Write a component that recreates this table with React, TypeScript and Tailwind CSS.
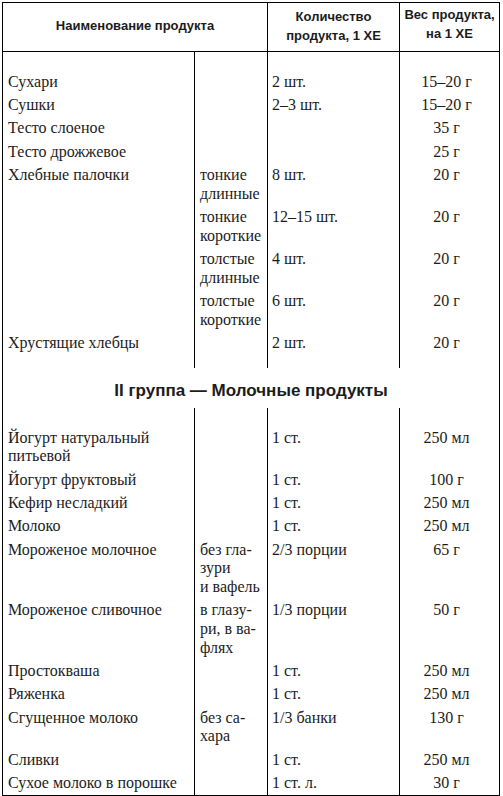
import React from "react";

type Row = {
  name: string[];
  kind?: string[];
  qty?: string;
  weight: string;
};

const breadRows: Row[] = [
  { name: ["Сухари"], qty: "2 шт.", weight: "15–20 г" },
  { name: ["Сушки"], qty: "2–3 шт.", weight: "15–20 г" },
  { name: ["Тесто слоеное"], weight: "35 г" },
  { name: ["Тесто дрожжевое"], weight: "25 г" },
  { name: ["Хлебные палочки"], kind: ["тонкие", "длинные"], qty: "8 шт.", weight: "20 г" },
  { name: [], kind: ["тонкие", "короткие"], qty: "12–15 шт.", weight: "20 г" },
  { name: [], kind: ["толстые", "длинные"], qty: "4 шт.", weight: "20 г" },
  { name: [], kind: ["толстые", "короткие"], qty: "6 шт.", weight: "20 г" },
  { name: ["Хрустящие хлебцы"], qty: "2 шт.", weight: "20 г" },
];

const milkRows: Row[] = [
  { name: ["Йогурт натуральный", "питьевой"], qty: "1 ст.", weight: "250 мл" },
  { name: ["Йогурт фруктовый"], qty: "1 ст.", weight: "100 г" },
  { name: ["Кефир несладкий"], qty: "1 ст.", weight: "250 мл" },
  { name: ["Молоко"], qty: "1 ст.", weight: "250 мл" },
  { name: ["Мороженое молочное"], kind: ["без гла-", "зури", "и вафель"], qty: "2/3 порции", weight: "65 г" },
  { name: ["Мороженое сливочное"], kind: ["в глазу-", "ри, в ва-", "флях"], qty: "1/3 порции", weight: "50 г" },
  { name: ["Простокваша"], qty: "1 ст.", weight: "250 мл" },
  { name: ["Ряженка"], qty: "1 ст.", weight: "250 мл" },
  { name: ["Сгущенное молоко"], kind: ["без са-", "хара"], qty: "1/3 банки", weight: "130 г" },
  { name: ["Сливки"], qty: "1 ст.", weight: "250 мл" },
  { name: ["Сухое молоко в порошке"], qty: "1 ст. л.", weight: "30 г" },
];

const cols = "grid grid-cols-[191px_73px_132px_100px]";

const Lines = ({ items }: { items?: string[] }) => (
  <>
    {(items ?? []).map((t, i) => (
      <div key={i} className="whitespace-nowrap">
        {t}
      </div>
    ))}
  </>
);

const Spacer = ({ h }: { h: string }) => (
  <div className={cols}>
    <div className={h} />
    <div className="border-l border-black" />
    <div className="border-l border-black" />
    <div className="border-l border-black" />
  </div>
);

const BodyRow = ({ row }: { row: Row }) => (
  <div className={`${cols} leading-[18.7px]`}>
    <div className="pl-[5px] py-[2.3px]">
      <Lines items={row.name} />
    </div>
    <div className="border-l border-black pl-[5px] py-[2.3px]">
      <Lines items={row.kind} />
    </div>
    <div className="border-l border-black pl-[4px] py-[2.3px] whitespace-nowrap">
      {row.qty}
    </div>
    <div className="border-l border-black pr-[6px] py-[2.3px] text-center whitespace-nowrap">
      {row.weight}
    </div>
  </div>
);

export default function App() {
  return (
    <div className="bg-white w-[503px] h-[796px] pt-[2px] pl-[2px]">
      <div className="w-[498px] border border-black text-[#1c1c1c] text-[16px] font-[family-name:Liberation_Serif,serif]">
        {/* Header */}
        <div className="grid grid-cols-[191px_73px_132px_100px] h-[49px] border-b border-black font-bold text-[13px] leading-[19px] font-[family-name:Liberation_Sans,sans-serif]">
          <div className="col-span-2 flex items-center justify-center pb-[4px]">
            Наименование продукта
          </div>
          <div className="border-l border-black flex flex-col items-center justify-center pb-[2px]">
            <div>Количество</div>
            <div>продукта, 1 ХЕ</div>
          </div>
          <div className="border-l border-black flex flex-col items-center justify-center pb-[6px]">
            <div>Вес продукта,</div>
            <div>на 1 ХЕ</div>
          </div>
        </div>

        {/* I group */}
        <Spacer h="h-[18.4px]" />
        {breadRows.map((r, i) => (
          <BodyRow key={i} row={r} />
        ))}
        <Spacer h="h-[13px]" />

        {/* Section title */}
        <div className="h-[40px] flex items-center justify-center pt-[5px] font-bold text-[17px] font-[family-name:Liberation_Sans,sans-serif]">
          II группа — Молочные продукты
        </div>

        {/* II group */}
        <Spacer h="h-[18.5px]" />
        {milkRows.map((r, i) => (
          <BodyRow key={i} row={r} />
        ))}
      </div>
    </div>
  );
}
